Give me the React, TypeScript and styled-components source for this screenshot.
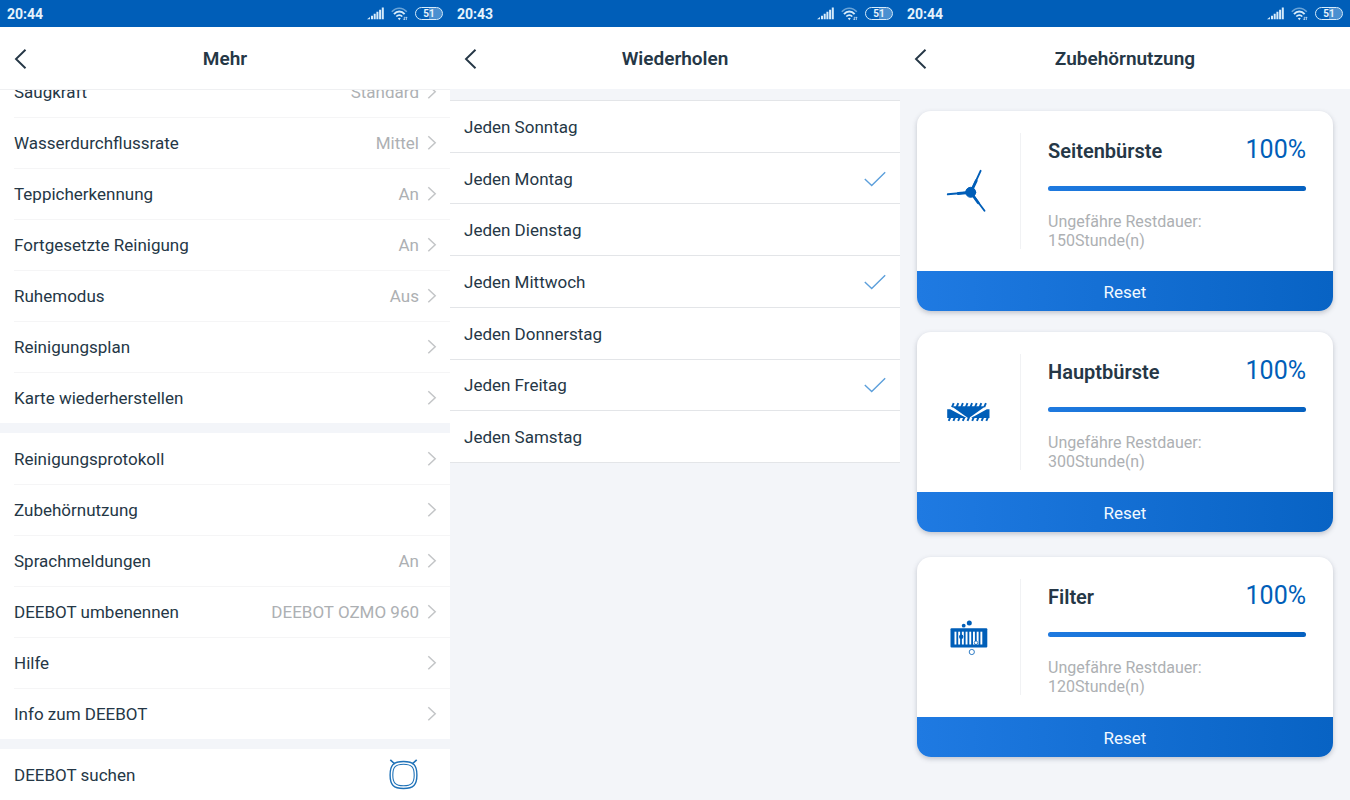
import React, { useState } from "react";
import styled, { createGlobalStyle } from "styled-components";

const blue = "#005eb8";
const ink = "#253746";
const muted = "#adb0b3";
const canvas = "#f3f5f9";

const GlobalStyle = createGlobalStyle`
  *, *::before, *::after { box-sizing: border-box; }
  body { margin: 0; background: ${canvas}; color: ${ink}; font-family: Roboto, "Liberation Sans", sans-serif; }
  ul { list-style: none; margin: 0; padding: 0; }
  svg { display: block; flex: none; }
`;

const Screens = styled.main`
  display: grid;
  grid-template-columns: repeat(3, minmax(0, 1fr));
  height: 100vh;
  overflow: hidden;
`;

const Screen = styled.section`
  display: flex;
  flex-direction: column;
  min-height: 0;
  background: ${canvas};
`;

const StatusBar = styled.div`
  display: flex;
  align-items: center;
  justify-content: space-between;
  flex: none;
  height: 27px;
  padding: 0 7px;
  background: ${blue};
  color: #e6f3fc;
  font-size: 14px;
  line-height: 20px;
  font-weight: 700;
`;

const StatusIcons = styled.div`
  display: flex;
  align-items: center;
  gap: 7px;
`;

const Battery = styled.span`
  display: flex;
  align-items: center;
  justify-content: center;
  width: 28px;
  height: 13px;
  border: 1px solid #d6ebfa;
  border-radius: 7px;
  background: linear-gradient(90deg, ${blue} 50%, #4a8fd0 50%);
  font-size: 10px;
  line-height: 11px;
`;

const Header = styled.header`
  display: grid;
  grid-template-columns: 44px 1fr 44px;
  align-items: center;
  flex: none;
  height: 62px;
  padding-top: 2px;
  background: #fff;
`;

const PlainButton = styled.button`
  border: 0;
  padding: 0;
  background: none;
  color: inherit;
  font-family: inherit;
  font-size: 17px;
  line-height: 24px;
  cursor: pointer;
`;

const BackButton = styled(PlainButton)`
  display: flex;
  align-items: center;
  height: 44px;
  padding-left: 14px;
`;

const Title = styled.h1`
  margin: 0;
  font-size: 19px;
  line-height: 24px;
  font-weight: 600;
  text-align: center;
`;

const ScrollArea = styled.div`
  flex: 1;
  min-height: 0;
  overflow: hidden;
  border-top: 1px solid #eff0f2;
`;

/* The list is shown part-way scrolled, with its first row under the header. */
const ScrolledContent = styled.div`
  display: grid;
  gap: 10px;
  margin-top: -24px;
`;

const MenuGroup = styled.ul`
  background: #fff;
`;

const MenuItem = styled.li`
  height: 51px;
  margin-left: 14px;
  & + & { border-top: 1px solid #f5f5f6; }
`;

const MenuButton = styled(PlainButton)<{ $wideEnd?: boolean }>`
  display: flex;
  align-items: center;
  width: 100%;
  height: 100%;
  padding-right: ${(p) => (p.$wideEnd ? 31 : 13)}px;
  text-align: left;
`;

const MenuLabel = styled.span`
  flex: 1;
`;

const MenuValue = styled.span`
  margin-right: 8px;
  color: ${muted};
`;

const DayList = styled.ul`
  display: grid;
  grid-auto-rows: 1fr;
  min-height: 363px;
  margin-top: 11px;
  border-top: 1px solid #e3e5e8;
  background: #fff;
`;

const DayItem = styled.li`
  border-bottom: 1px solid #e3e5e8;
`;

const DayLabel = styled.label`
  display: flex;
  align-items: center;
  justify-content: space-between;
  height: 100%;
  padding: 1px 14px 0;
  font-size: 17px;
  line-height: 24px;
  cursor: pointer;
`;

const TickBox = styled.span`
  display: grid;
  > * { grid-area: 1 / 1; }
  > svg { visibility: hidden; pointer-events: none; }
  > input:checked + svg { visibility: visible; }
`;

const TickInput = styled.input`
  appearance: none;
  width: 22px;
  height: 16px;
  margin: 0;
  cursor: pointer;
`;

const CardList = styled.div`
  display: flex;
  flex-direction: column;
  gap: 21px;
  padding: 22px 17px;
`;

const Card = styled.article`
  overflow: hidden;
  border-radius: 14px;
  background: #fff;
  box-shadow: 0 2px 5px rgba(60, 70, 90, 0.28);
  &:last-child { margin-top: 4px; }
`;

const CardBody = styled.div`
  display: grid;
  grid-template-columns: 104px 1fr;
  align-items: center;
  height: 160px;
`;

const IconCell = styled.div`
  display: flex;
  align-items: center;
  height: 116px;
  padding-left: 29px;
  border-right: 1px solid #f1f2f4;
`;

const CardInfo = styled.div`
  padding: 4px 27px 0;
`;

const CardHead = styled.div`
  display: flex;
  align-items: baseline;
  justify-content: space-between;
`;

const PartName = styled.h2`
  margin: 0;
  font-size: 20px;
  line-height: 28px;
  font-weight: 600;
`;

const Percent = styled.span`
  color: ${blue};
  font-size: 25px;
  line-height: 28px;
`;

const Track = styled.div`
  height: 5px;
  margin: 21px 0;
  border-radius: 3px;
  background: #e6eaf0;
`;

const Fill = styled.div`
  height: 100%;
  border-radius: 3px;
  background: linear-gradient(90deg, #1f7ae0, #0561c0);
`;

const Remaining = styled.p`
  margin: 0;
  color: ${muted};
  font-size: 16px;
  line-height: 19px;
`;

const ResetButton = styled(PlainButton)`
  width: 100%;
  height: 40px;
  padding-top: 1px;
  background: linear-gradient(90deg, #1f7ae2, #0863c4);
  color: #f2f9ff;
`;

const SignalIcon = () => (
  <svg width="17" height="13" viewBox="0 0 17 13" fill="#d6ebfa" aria-hidden="true">
    <path d="M0 12.2 3 10v2.200zM4 8.800h2v3.400H4zM6.700 6.800h2v5.400h-2zM9.400 4.800h2v7.400h-2zM12.100 2.800h2v9.400h-2zM14.800.5h2v11.700h-2z" />
  </svg>
);

const WifiIcon = () => (
  <svg width="17" height="14" viewBox="0 0 17 14" fill="none" stroke="#d6ebfa" aria-hidden="true">
    <path d="M.8 4.8C5-.1 11.5-.1 15.800 4.800" strokeWidth="1.5" opacity=".5" />
    <path d="M3 7.100c3-3.500 7.600-3.500 10.600 0" strokeWidth="1.9" />
    <path d="M5.300 9.500c1.800-1.900 4.200-1.900 6 0" strokeWidth="1.7" />
    <path d="M6.800 11.300q1.500-1.200 3 0l-1.500 1.900z" fill="#d6ebfa" stroke="none" />
    <path d="M13.300 9.800v3M12.400 11.900l.9 1 .5-.6M15.300 13v-3M14.700 10.700l.6-.8.8.8" strokeWidth=".8" />
  </svg>
);

const BackIcon = () => (
  <svg width="13" height="20" viewBox="0 0 13 20" fill="none" stroke={ink} strokeWidth="1.9" aria-hidden="true">
    <path d="M11.5.8 2 10l9.5 9.2" />
  </svg>
);

const ChevronIcon = () => (
  <svg width="10" height="16" viewBox="0 0 10 16" fill="none" stroke="#c3c5c7" strokeWidth="1.5" aria-hidden="true">
    <path d="M1.300 1.200 8.200 7.700l-6.900 6.500" />
  </svg>
);

const TickIcon = () => (
  <svg width="22" height="16" viewBox="0 0 22 16" fill="none" stroke="#5c9fdb" strokeWidth="1.4" aria-hidden="true">
    <path d="M.8 8 7.700 14.500 21.200 1.200" />
  </svg>
);

const RobotIcon = () => (
  <svg width="31" height="32" viewBox="0 1 31 32" fill="none" stroke="#1f72b8" aria-hidden="true">
    <path d="M15.500 3.500C25.500 3.500 28.900 7 28.900 17S25.500 30.500 15.500 30.500 2.100 27 2.100 17 5.500 3.500 15.500 3.500Z" strokeWidth="1.4" />
    <path d="M15.500 6.200C23.500 6.200 26.200 9 26.200 17S23.500 27.800 15.500 27.800 4.800 25 4.800 17 7.500 6.200 15.500 6.200Z" strokeWidth="1.1" />
    <path d="m2.300 1.800 4.600 4.200M28.700 1.800l-4.600 4.200" strokeWidth="1.6" />
  </svg>
);

const SideBrushIcon = () => (
  <svg width="44" height="44" viewBox="0 0 44 44" fill={blue} stroke={blue} strokeLinecap="round" aria-hidden="true">
    <circle cx="24.7" cy="23.3" r="5" />
    <path d="M24.700 23.300 34.600 1.800M24.700 23.300 1.800 25.300M24.700 23.300 38.500 41.800" strokeWidth="1.9" />
    <path d="m24.700 23.300 5.500-11.500M24.700 23.300l-12.500 1.200M24.700 23.300l7.500 10.500" strokeWidth="2.8" />
  </svg>
);

const bristles = Array.from({ length: 8 }, (_, i) => i);

const MainBrushIcon = () => (
  <svg width="44" height="44" viewBox="0 0 44 44" fill={blue} aria-hidden="true">
    <path d="M5.500 16.200h34L23 28h-1z" />
    <path d="M1.200 19.300h3L20.500 28H1.200zM43.500 19.300h-2.700L25 28h18.500z" />
    <g stroke={blue} strokeWidth="1.9">
      {bristles.map((i) => (
        <path key={`t${i}`} d={`M${6 + i * 4.6} 17.200l1.700-4`} />
      ))}
      {[...bristles, 8].map((i) => (
        <path key={`b${i}`} d={`M${4.4 + i * 4.7} 27l-1.700 3.900`} />
      ))}
    </g>
  </svg>
);

const FilterIcon = () => (
  <svg width="44" height="44" viewBox="0 0 44 44" aria-hidden="true">
    <rect x="4.5" y="13.3" width="36.8" height="19.2" rx="1" fill={blue} />
    <g fill="#fff">
      {bristles.map((i) => (
        <rect key={i} x={8.5 + i * 3.7} y="16.7" width="1.9" height="12.8" />
      ))}
    </g>
    <circle cx="17.7" cy="10.7" r="1.9" fill={blue} />
    <circle cx="23.3" cy="8" r="2.5" fill={blue} />
    <circle cx="15.2" cy="21.7" r="2.2" fill={blue} />
    <circle cx="30" cy="27.7" r="1.8" fill="#fff" stroke={blue} strokeWidth=".7" />
    <circle cx="25.8" cy="37" r="2.6" fill="#fff" stroke={blue} strokeWidth=".8" />
  </svg>
);

type Entry = { label: string; value?: string; robot?: boolean };

const menu: Entry[][] = [
  [
    { label: "Saugkraft", value: "Standard" },
    { label: "Wasserdurchflussrate", value: "Mittel" },
    { label: "Teppicherkennung", value: "An" },
    { label: "Fortgesetzte Reinigung", value: "An" },
    { label: "Ruhemodus", value: "Aus" },
    { label: "Reinigungsplan" },
    { label: "Karte wiederherstellen" },
  ],
  [
    { label: "Reinigungsprotokoll" },
    { label: "Zubehörnutzung" },
    { label: "Sprachmeldungen", value: "An" },
    { label: "DEEBOT umbenennen", value: "DEEBOT OZMO 960" },
    { label: "Hilfe" },
    { label: "Info zum DEEBOT" },
  ],
  [{ label: "DEEBOT suchen", robot: true }],
];

const weekdays = ["Sonntag", "Montag", "Dienstag", "Mittwoch", "Donnerstag", "Freitag", "Samstag"];

const parts = [
  { name: "Seitenbürste", percent: 100, hours: 150, Icon: SideBrushIcon },
  { name: "Hauptbürste", percent: 100, hours: 300, Icon: MainBrushIcon },
  { name: "Filter", percent: 100, hours: 120, Icon: FilterIcon },
];

function PhoneTop({ time, title }: { time: string; title: string }) {
  return (
    <>
      <StatusBar>
        <time>{time}</time>
        <StatusIcons>
          <SignalIcon />
          <WifiIcon />
          <Battery>51</Battery>
        </StatusIcons>
      </StatusBar>
      <Header>
        <BackButton type="button" aria-label="Zurück">
          <BackIcon />
        </BackButton>
        <Title>{title}</Title>
      </Header>
    </>
  );
}

export default function App() {
  const [days, setDays] = useState<string[]>(["Montag", "Mittwoch", "Freitag"]);
  const toggle = (day: string) =>
    setDays((current) => (current.includes(day) ? current.filter((d) => d !== day) : [...current, day]));

  return (
    <>
      <GlobalStyle />
      <Screens>
        <Screen>
          <PhoneTop time="20:44" title="Mehr" />
          <ScrollArea>
            <ScrolledContent>
              {menu.map((group) => (
                <MenuGroup key={group[0].label}>
                  {group.map(({ label, value, robot }) => (
                    <MenuItem key={label}>
                      <MenuButton type="button" $wideEnd={robot}>
                        <MenuLabel>{label}</MenuLabel>
                        {value && <MenuValue>{value}</MenuValue>}
                        {robot ? <RobotIcon /> : <ChevronIcon />}
                      </MenuButton>
                    </MenuItem>
                  ))}
                </MenuGroup>
              ))}
            </ScrolledContent>
          </ScrollArea>
        </Screen>

        <Screen>
          <PhoneTop time="20:43" title="Wiederholen" />
          <DayList>
            {weekdays.map((day) => (
              <DayItem key={day}>
                <DayLabel>
                  Jeden {day}
                  <TickBox>
                    <TickInput type="checkbox" checked={days.includes(day)} onChange={() => toggle(day)} />
                    <TickIcon />
                  </TickBox>
                </DayLabel>
              </DayItem>
            ))}
          </DayList>
        </Screen>

        <Screen>
          <PhoneTop time="20:44" title="Zubehörnutzung" />
          <CardList>
            {parts.map(({ name, percent, hours, Icon }) => (
              <Card key={name}>
                <CardBody>
                  <IconCell>
                    <Icon />
                  </IconCell>
                  <CardInfo>
                    <CardHead>
                      <PartName>{name}</PartName>
                      <Percent>{percent}%</Percent>
                    </CardHead>
                    <Track>
                      <Fill style={{ width: `${percent}%` }} />
                    </Track>
                    <Remaining>
                      Ungefähre Restdauer:
                      <br />
                      {hours}Stunde(n)
                    </Remaining>
                  </CardInfo>
                </CardBody>
                <ResetButton type="button">Reset</ResetButton>
              </Card>
            ))}
          </CardList>
        </Screen>
      </Screens>
    </>
  );
}
